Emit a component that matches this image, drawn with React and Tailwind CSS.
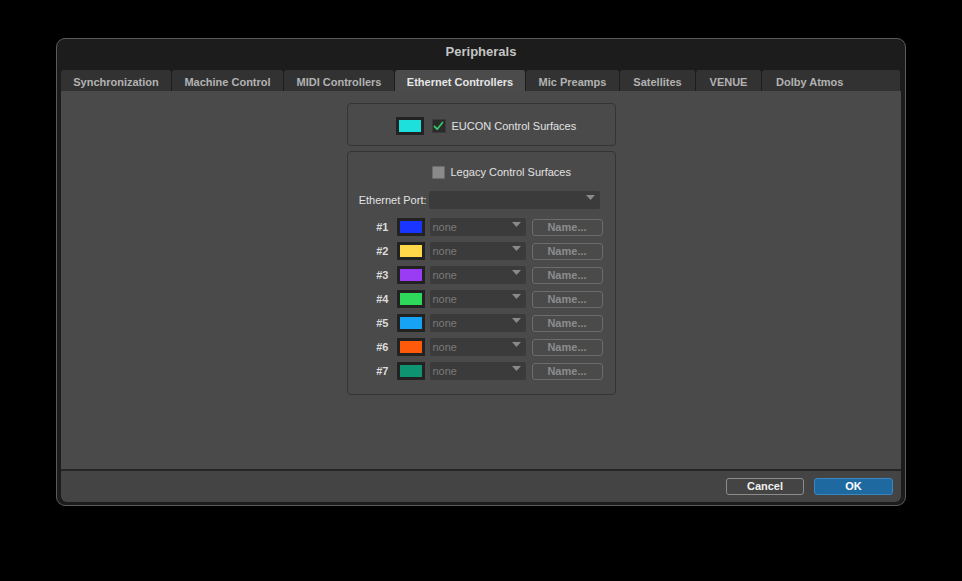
import React from 'react';

const tabs = [
  { label: 'Synchronization', w: 'w-[111px] justify-center' },
  { label: 'Machine Control', w: 'w-[112px] justify-center' },
  { label: 'MIDI Controllers', w: 'w-[111px] justify-center' },
  { label: 'Ethernet Controllers', w: 'w-[131px] justify-center', active: true },
  { label: 'Mic Preamps', w: 'w-[94px] justify-center' },
  { label: 'Satellites', w: 'w-[76px] justify-center' },
  { label: 'VENUE', w: 'w-[66px] justify-center' },
  { label: 'Dolby Atmos', w: 'flex-1 pl-[14px]' },
];

const rows = [
  { n: '#1', color: 'bg-[#1a35ff]' },
  { n: '#2', color: 'bg-[#ffd84a]' },
  { n: '#3', color: 'bg-[#9b3cf5]' },
  { n: '#4', color: 'bg-[#2ed85a]' },
  { n: '#5', color: 'bg-[#16a2f5]' },
  { n: '#6', color: 'bg-[#ff5a0a]' },
  { n: '#7', color: 'bg-[#0e9470]' },
];

const Arrow = () => (
  <svg width="9" height="6" viewBox="0 0 9 6" className="absolute right-[5px] top-[4px]">
    <path d="M0 0 L9 0 L4.5 5 Z" fill="#8a8a8a" />
  </svg>
);

const Swatch = ({ color }) => (
  <div className="w-[28px] h-[18px] bg-[#222] p-[3px] shrink-0">
    <div className={`w-full h-full ${color}`}></div>
  </div>
);

const Peripherals = () => {
  return (
    <div className="w-[962px] h-[581px] bg-black pt-[38px] pl-[56px] font-['Liberation_Sans',Arial,sans-serif]">
      {/* Window */}
      <div className="w-[850px] h-[468px] bg-[#1c1c1c] border border-[#5a5a5a] rounded-[9px] flex flex-col overflow-hidden">
        {/* Title */}
        <div className="h-[31px] flex items-center justify-center pb-[5px]">
          <span className="text-[13px] font-bold text-[#c4c4c4]">Peripherals</span>
        </div>

        <div className="flex-1 flex flex-col px-[4px] pb-[3px]">
          {/* Tabs */}
          <div className="h-[21px] flex shrink-0">
            {tabs.map((t) => (
              <div
                key={t.label}
                className={`${t.w} h-full flex items-center pt-[3px] rounded-t-[3px] border-r border-[#1c1c1c] text-[11px] font-bold ${
                  t.active ? 'bg-[#4b4b4b] text-[#e6e6e6]' : 'bg-[#323232] text-[#b2b2b2]'
                }`}
              >
                {t.label}
              </div>
            ))}
          </div>

          {/* Content */}
          <div className="h-[378px] bg-[#4a4a4a] flex flex-col items-center pt-[12px] gap-[5px]">
            {/* EUCON */}
            <div className="w-[269px] h-[43px] border border-[#343434] rounded-[4px] flex items-center pl-[48px] pt-[3px] gap-[8px]">
              <Swatch color="bg-[#1de0dd]" />
              <div className="w-[14px] h-[14px] bg-[#2a2a2a] border border-[#3a3a3a] flex items-center justify-center">
                <svg width="11" height="10" viewBox="0 0 11 10">
                  <path d="M1.5 5.5 L4.2 8.2 L9.5 1.5" stroke="#35c86a" strokeWidth="1.8" fill="none" strokeLinecap="round" strokeLinejoin="round" />
                </svg>
              </div>
              <span className="text-[11px] text-[#e2e2e2] -ml-[2px]">EUCON Control Surfaces</span>
            </div>

            {/* Legacy */}
            <div className="w-[269px] h-[244px] border border-[#343434] rounded-[4px] flex flex-col pt-[13px]">
              <div className="flex items-center pl-[84px] gap-[6px] h-[14px]">
                <div className="w-[13px] h-[13px] bg-[#8a8a8a] border border-[#6c6c6c] rounded-[1px]"></div>
                <span className="text-[11px] text-[#e2e2e2]">Legacy Control Surfaces</span>
              </div>

              <div className="flex items-center mt-[12px] h-[18px]">
                <span className="w-[79px] text-right text-[11px] text-[#e2e2e2]">Ethernet Port:</span>
                <div className="relative ml-[2px] w-[171px] h-[18px] bg-[#3b3b3b] rounded-[2px]">
                  <Arrow />
                </div>
              </div>

              <div className="flex flex-col gap-[6px] mt-[9px]">
                {rows.map((r) => (
                  <div key={r.n} className="flex items-center h-[18px]">
                    <span className="w-[41px] text-right text-[11px] font-bold text-[#dcdcdc]">{r.n}</span>
                    <div className="ml-[8px]">
                      <Swatch color={r.color} />
                    </div>
                    <div className="relative ml-[5px] w-[96px] h-[18px] bg-[#3b3b3b] rounded-[2px] flex items-center pl-[3px]">
                      <span className="text-[11px] text-[#7a7a7a]">none</span>
                      <Arrow />
                    </div>
                    <div className="ml-[6px] w-[71px] h-[17px] border border-[#6c6c6c] rounded-[3px] flex items-center justify-center">
                      <span className="text-[11px] font-bold text-[#8c8c8c]">Name...</span>
                    </div>
                  </div>
                ))}
              </div>
            </div>
          </div>

          {/* Divider */}
          <div className="h-[2px] bg-[#252525]"></div>

          {/* Footer */}
          <div className="flex-1 bg-[#444444] flex items-center justify-end pr-[8px] gap-[10px] rounded-b-[6px]">
            <button className="w-[78px] h-[17px] border border-[#8c8c8c] rounded-[3px] text-[11px] font-bold text-[#f0f0f0] flex items-center justify-center">
              Cancel
            </button>
            <button className="w-[79px] h-[17px] bg-[#1e69a0] border border-[#3b86bd] rounded-[3px] text-[11px] font-bold text-white flex items-center justify-center">
              OK
            </button>
          </div>
        </div>
      </div>
    </div>
  );
};

export default Peripherals;
